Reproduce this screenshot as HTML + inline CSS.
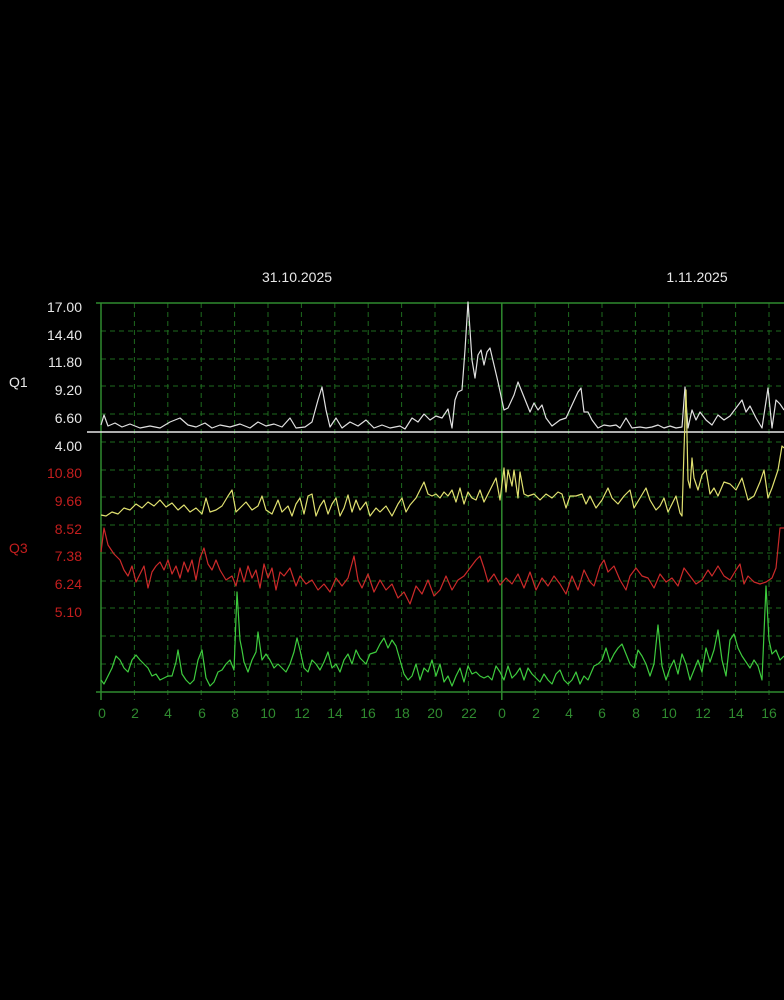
<!DOCTYPE html>
<html><head><meta charset="utf-8"><style>
html,body{margin:0;padding:0;background:#000;width:784px;height:1000px;overflow:hidden}
svg{display:block}
text{font-family:"Liberation Sans",sans-serif;font-size:14px}
</style></head><body>
<svg width="784" height="1000" viewBox="0 0 784 1000">
<rect width="784" height="1000" fill="#000"/>
<g fill="#e8e8e8">
<text x="297" y="282" text-anchor="middle">31.10.2025</text>
<text x="697" y="282" text-anchor="middle">1.11.2025</text>
<text x="9" y="387">Q1</text>
<text x="82" y="312" text-anchor="end">17.00</text>
<text x="82" y="340" text-anchor="end">14.40</text>
<text x="82" y="367" text-anchor="end">11.80</text>
<text x="82" y="395" text-anchor="end">9.20</text>
<text x="82" y="423" text-anchor="end">6.60</text>
<text x="82" y="451" text-anchor="end">4.00</text>
</g>
<g fill="#c41e1e">
<text x="9" y="553">Q3</text>
<text x="82" y="478" text-anchor="end">10.80</text>
<text x="82" y="506" text-anchor="end">9.66</text>
<text x="82" y="534" text-anchor="end">8.52</text>
<text x="82" y="561" text-anchor="end">7.38</text>
<text x="82" y="589" text-anchor="end">6.24</text>
<text x="82" y="617" text-anchor="end">5.10</text>
</g>
<g stroke="#1e6a1e" stroke-width="1" stroke-dasharray="5,4">
<line x1="101" y1="331" x2="784" y2="331"/><line x1="101" y1="359" x2="784" y2="359"/>
<line x1="101" y1="386" x2="784" y2="386"/><line x1="101" y1="414" x2="784" y2="414"/>
<line x1="101" y1="442" x2="784" y2="442"/><line x1="101" y1="470" x2="784" y2="470"/>
<line x1="101" y1="497" x2="784" y2="497"/><line x1="101" y1="525" x2="784" y2="525"/>
<line x1="101" y1="553" x2="784" y2="553"/><line x1="101" y1="581" x2="784" y2="581"/>
<line x1="101" y1="608" x2="784" y2="608"/><line x1="101" y1="636" x2="784" y2="636"/>
<line x1="101" y1="664" x2="784" y2="664"/>
<line x1="134.4" y1="303" x2="134.4" y2="700"/><line x1="167.8" y1="303" x2="167.8" y2="700"/>
<line x1="201.2" y1="303" x2="201.2" y2="700"/><line x1="234.6" y1="303" x2="234.6" y2="700"/>
<line x1="268" y1="303" x2="268" y2="700"/><line x1="301.4" y1="303" x2="301.4" y2="700"/>
<line x1="334.8" y1="303" x2="334.8" y2="700"/><line x1="368.2" y1="303" x2="368.2" y2="700"/>
<line x1="401.6" y1="303" x2="401.6" y2="700"/><line x1="435" y1="303" x2="435" y2="700"/>
<line x1="468.4" y1="303" x2="468.4" y2="700"/>
<line x1="535.2" y1="303" x2="535.2" y2="700"/><line x1="568.6" y1="303" x2="568.6" y2="700"/>
<line x1="602" y1="303" x2="602" y2="700"/><line x1="635.4" y1="303" x2="635.4" y2="700"/>
<line x1="668.8" y1="303" x2="668.8" y2="700"/><line x1="702.2" y1="303" x2="702.2" y2="700"/>
<line x1="735.6" y1="303" x2="735.6" y2="700"/><line x1="769" y1="303" x2="769" y2="700"/>
</g>
<g stroke="#2f8a2f" stroke-width="1.5">
<line x1="96" y1="303" x2="784" y2="303"/>
<line x1="96" y1="692" x2="784" y2="692"/>
<line x1="101" y1="303" x2="101" y2="700"/>
<line x1="501.8" y1="303" x2="501.8" y2="700"/>
</g>
<line x1="87" y1="432" x2="784" y2="432" stroke="#e8e8e8" stroke-width="1.5"/>
<g fill="none" stroke-width="1.2" stroke-linejoin="round">
<polyline stroke="#e0e0e0" points="101,425 104,415 108,426 115,423 122,427 130,424 140,428 150,426 160,428 170,422 180,418 188,425 196,427 205,423 212,428 220,425 230,427 240,424 250,428 258,422 266,426 274,424 282,427 290,418 296,428 305,427 312,422 318,400 322,387 326,410 330,427 336,418 342,428 350,422 358,426 366,420 374,428 382,425 390,428 400,426 405,429 412,418 418,422 424,414 430,420 436,416 442,418 448,409 452,428 455,400 458,392 462,390 465,350 468,302 470,330 472,360 475,378 478,355 481,350 484,365 487,352 490,348 494,365 498,382 504,410 508,408 514,395 518,382 522,392 526,402 530,412 534,403 538,410 542,405 546,418 552,426 560,420 566,418 572,405 578,392 581,388 584,412 588,412 592,420 598,428 604,425 610,426 616,425 620,428 626,418 632,428 640,427 646,428 652,427 658,425 664,428 670,426 676,428 682,427 685,387 688,428 692,410 696,420 700,412 706,420 712,425 718,415 724,420 730,416 736,408 742,400 746,412 750,406 756,418 762,428 768,388 772,428 776,400 780,404 784,410"/>
<polyline stroke="#e0e070" points="101,515 106,516 112,512 118,514 124,508 130,510 136,504 142,508 148,502 154,506 160,500 166,507 172,503 178,510 184,505 190,512 196,508 202,514 206,498 210,512 216,510 222,506 228,496 232,490 236,512 240,508 246,502 252,510 258,506 262,496 266,510 272,514 278,500 282,512 288,506 292,516 296,504 300,498 304,514 308,496 312,494 316,516 320,506 324,500 328,514 332,504 336,498 340,516 344,508 348,495 352,512 356,500 360,510 366,502 370,516 376,508 380,512 386,506 392,516 398,504 402,498 406,512 410,505 416,498 420,490 424,482 428,494 432,496 436,494 440,498 444,492 448,496 452,490 456,502 460,488 464,504 468,492 472,498 476,500 480,490 484,502 488,494 492,486 496,478 500,500 504,468 506,492 508,470 512,486 514,470 518,498 520,472 524,494 528,496 534,494 540,500 546,494 552,498 558,492 562,494 566,508 570,496 576,496 582,494 586,504 590,496 596,508 602,500 608,488 612,498 618,504 624,496 630,490 634,508 640,498 646,488 650,500 656,510 660,506 664,498 668,512 672,504 676,496 680,513 682,516 684,450 686,390 688,480 690,488 692,458 694,478 698,490 702,475 706,470 710,494 714,488 718,496 724,482 730,484 736,490 742,478 748,500 754,496 760,482 764,470 768,498 772,488 778,470 782,446 784,448"/>
<polyline stroke="#cc2a2a" points="101,552 104,528 108,545 114,554 120,560 124,570 128,576 132,566 136,582 140,574 144,566 148,588 152,572 156,566 160,562 164,570 168,560 172,574 176,566 180,578 184,562 188,572 192,560 196,580 200,558 204,548 208,564 212,570 216,560 220,570 226,580 232,576 236,586 240,568 244,582 248,566 252,578 256,570 260,588 264,564 268,578 272,568 276,590 280,572 284,576 290,568 296,586 300,576 306,584 312,580 318,590 324,584 330,592 336,578 342,586 348,578 354,556 358,580 362,588 368,574 374,592 380,580 386,590 392,584 398,598 404,592 410,604 416,586 422,594 428,580 434,596 440,590 446,576 452,590 458,580 464,576 470,568 476,560 480,556 484,568 488,582 494,574 500,585 506,578 512,584 518,574 524,588 530,572 536,590 542,578 548,586 554,576 560,584 566,594 572,576 578,590 584,570 590,582 594,586 600,566 604,560 608,572 614,566 620,580 626,590 630,576 636,568 642,576 648,578 654,588 660,574 666,582 672,578 678,586 684,568 690,576 696,584 702,580 708,570 712,576 718,566 724,576 730,580 736,570 740,564 744,584 748,576 754,582 760,584 766,582 772,578 776,568 780,528 784,528"/>
<polyline stroke="#3ecb3e" points="101,680 104,684 108,676 112,668 116,656 120,660 124,668 128,672 132,660 136,655 140,660 144,664 148,668 152,676 156,674 160,680 164,678 168,676 172,676 176,662 178,650 182,674 186,680 190,684 194,680 198,660 202,650 206,678 210,686 214,682 218,672 222,670 226,664 230,660 234,670 237,592 240,640 242,650 244,662 248,672 252,660 256,652 258,632 262,660 266,654 270,660 274,668 278,664 282,668 286,672 290,664 294,652 297,638 300,650 304,668 308,672 312,660 316,664 320,670 324,662 328,652 332,668 336,664 340,672 344,660 348,654 352,664 356,650 360,658 366,664 370,654 376,652 380,644 384,638 388,648 392,640 396,646 400,660 404,674 408,680 412,676 416,664 420,680 424,668 428,672 432,660 436,676 440,664 444,682 448,676 452,686 456,676 460,668 464,682 468,666 472,674 476,672 480,676 484,678 488,676 492,680 496,666 500,672 504,680 508,666 512,678 516,674 520,668 524,680 528,668 532,674 536,678 540,682 544,674 548,680 552,684 556,674 560,670 564,680 568,684 572,680 576,672 580,684 584,676 588,680 594,666 598,664 602,660 606,648 610,662 614,654 618,648 622,644 626,654 630,664 634,668 638,650 642,656 646,664 650,676 654,664 658,625 662,666 666,680 670,668 674,660 678,674 682,654 686,664 690,680 694,670 698,660 702,672 706,648 710,662 714,650 718,630 722,660 726,676 730,640 734,634 738,648 742,656 746,662 750,668 754,660 758,666 762,680 766,586 769,640 772,654 776,650 780,660 784,656"/>
</g>
<g fill="#2f8a2f">
<text x="102" y="718" text-anchor="middle">0</text><text x="135" y="718" text-anchor="middle">2</text>
<text x="168" y="718" text-anchor="middle">4</text><text x="202" y="718" text-anchor="middle">6</text>
<text x="235" y="718" text-anchor="middle">8</text><text x="268" y="718" text-anchor="middle">10</text>
<text x="302" y="718" text-anchor="middle">12</text><text x="335" y="718" text-anchor="middle">14</text>
<text x="368" y="718" text-anchor="middle">16</text><text x="402" y="718" text-anchor="middle">18</text>
<text x="435" y="718" text-anchor="middle">20</text><text x="469" y="718" text-anchor="middle">22</text>
<text x="502" y="718" text-anchor="middle">0</text><text x="536" y="718" text-anchor="middle">2</text>
<text x="569" y="718" text-anchor="middle">4</text><text x="602" y="718" text-anchor="middle">6</text>
<text x="636" y="718" text-anchor="middle">8</text><text x="669" y="718" text-anchor="middle">10</text>
<text x="703" y="718" text-anchor="middle">12</text><text x="736" y="718" text-anchor="middle">14</text>
<text x="769" y="718" text-anchor="middle">16</text>
</g>
</svg>
</body></html>
